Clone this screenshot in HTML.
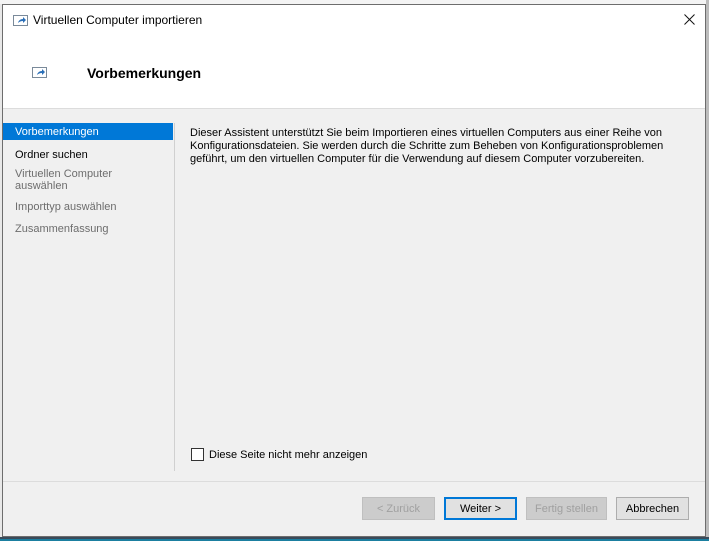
<!DOCTYPE html>
<html><head><style>
*{margin:0;padding:0;box-sizing:border-box}
body{width:709px;height:541px;overflow:hidden;background:#e8e8e8;font-family:"Liberation Sans",sans-serif;font-size:11.5px;color:#000;position:relative}
.abs{position:absolute}
.win{left:2px;top:4px;width:704px;height:533px;background:#f0f0f0;border:1px solid #6d6d6d;}
.hdr{left:0;top:0;width:702px;height:104px;background:#fff;border-bottom:1px solid #dcdcdc}
.icon{width:15px;height:11px;border:1px solid #7a8a9a;background:#fff}
.nav div{position:absolute;left:0;width:170px;padding-left:12px;line-height:12px;font-size:11px}
.btn{height:23px;border:1px solid #adadad;background:#e1e1e1;text-align:center;line-height:22px;font-size:11px}
</style></head><body>
<div class="abs" style="left:0;top:0;width:709px;height:4px;background:#f4f4f4"></div>
<div class="abs" style="left:706px;top:0;width:3px;height:541px;background:#bcbcbc"></div>
<div class="abs" style="left:0;top:537px;width:709px;height:4px;background:#3a4a5a"></div>
<div class="abs" style="left:0;top:539px;width:709px;height:2px;background:#1b7fa0"></div>
<div class="abs win">
 <div class="abs hdr">
  <div class="abs icon" style="left:10px;top:10px"><svg width="13" height="9" style="position:absolute;left:0;top:0"><path d="M4 7 Q5 3 9 3 L9 1 L12 4 L9 7 L9 5 Q6 5 4 7Z" fill="#2a6fb8"/></svg></div>
  <div class="abs" style="left:30px;top:8px;font-size:12px;color:#000">Virtuellen Computer importieren</div>
  <svg class="abs" style="left:681px;top:9px" width="11" height="11"><path d="M0.5 0.5L10.5 10.5M10.5 0.5L0.5 10.5" stroke="#111" stroke-width="1"/></svg>
  <div class="abs icon" style="left:29px;top:62px"><svg width="13" height="9" style="position:absolute;left:0;top:0"><path d="M4 7 Q5 3 9 3 L9 1 L12 4 L9 7 L9 5 Q6 5 4 7Z" fill="#2a6fb8"/></svg></div>
  <div class="abs" style="left:84px;top:60px;font-size:14px;font-weight:bold">Vorbemerkungen</div>
 </div>
 <div class="abs nav" style="left:0;top:118px">
  <div style="top:0;height:17px;line-height:18px;background:#0078d7;color:#fff">Vorbemerkungen</div>
  <div style="top:26px">Ordner suchen</div>
  <div style="top:45px;color:#6d6d6d">Virtuellen Computer<br>auswählen</div>
  <div style="top:78px;color:#6d6d6d">Importtyp auswählen</div>
  <div style="top:100px;color:#6d6d6d">Zusammenfassung</div>
 </div>
 <div class="abs" style="left:171px;top:118px;width:1px;height:348px;background:#d0d0d0"></div>
 <div class="abs" style="left:187px;top:122px;width:480px;line-height:13px;font-size:11px">Dieser Assistent unterstützt Sie beim Importieren eines virtuellen Computers aus einer Reihe von Konfigurationsdateien. Sie werden durch die Schritte zum Beheben von Konfigurationsproblemen geführt, um den virtuellen Computer für die Verwendung auf diesem Computer vorzubereiten.</div>
 <div class="abs" style="left:188px;top:443px;width:13px;height:13px;border:1px solid #333;background:#fff"></div>
 <div class="abs" style="left:206px;top:444px;font-size:11px">Diese Seite nicht mehr anzeigen</div>
 <div class="abs" style="left:0;top:476px;width:702px;height:1px;background:#dcdcdc"></div>
 <div class="abs btn" style="left:359px;top:492px;width:73px;color:#a0a0a0;background:#cccccc;border-color:#bfbfbf">&lt; Zurück</div>
 <div class="abs btn" style="left:441px;top:492px;width:73px;border:2px solid #0078d7;line-height:20px">Weiter &gt;</div>
 <div class="abs btn" style="left:523px;top:492px;width:81px;color:#a0a0a0;background:#cccccc;border-color:#bfbfbf">Fertig stellen</div>
 <div class="abs btn" style="left:613px;top:492px;width:73px">Abbrechen</div>
</div>
</body></html>
